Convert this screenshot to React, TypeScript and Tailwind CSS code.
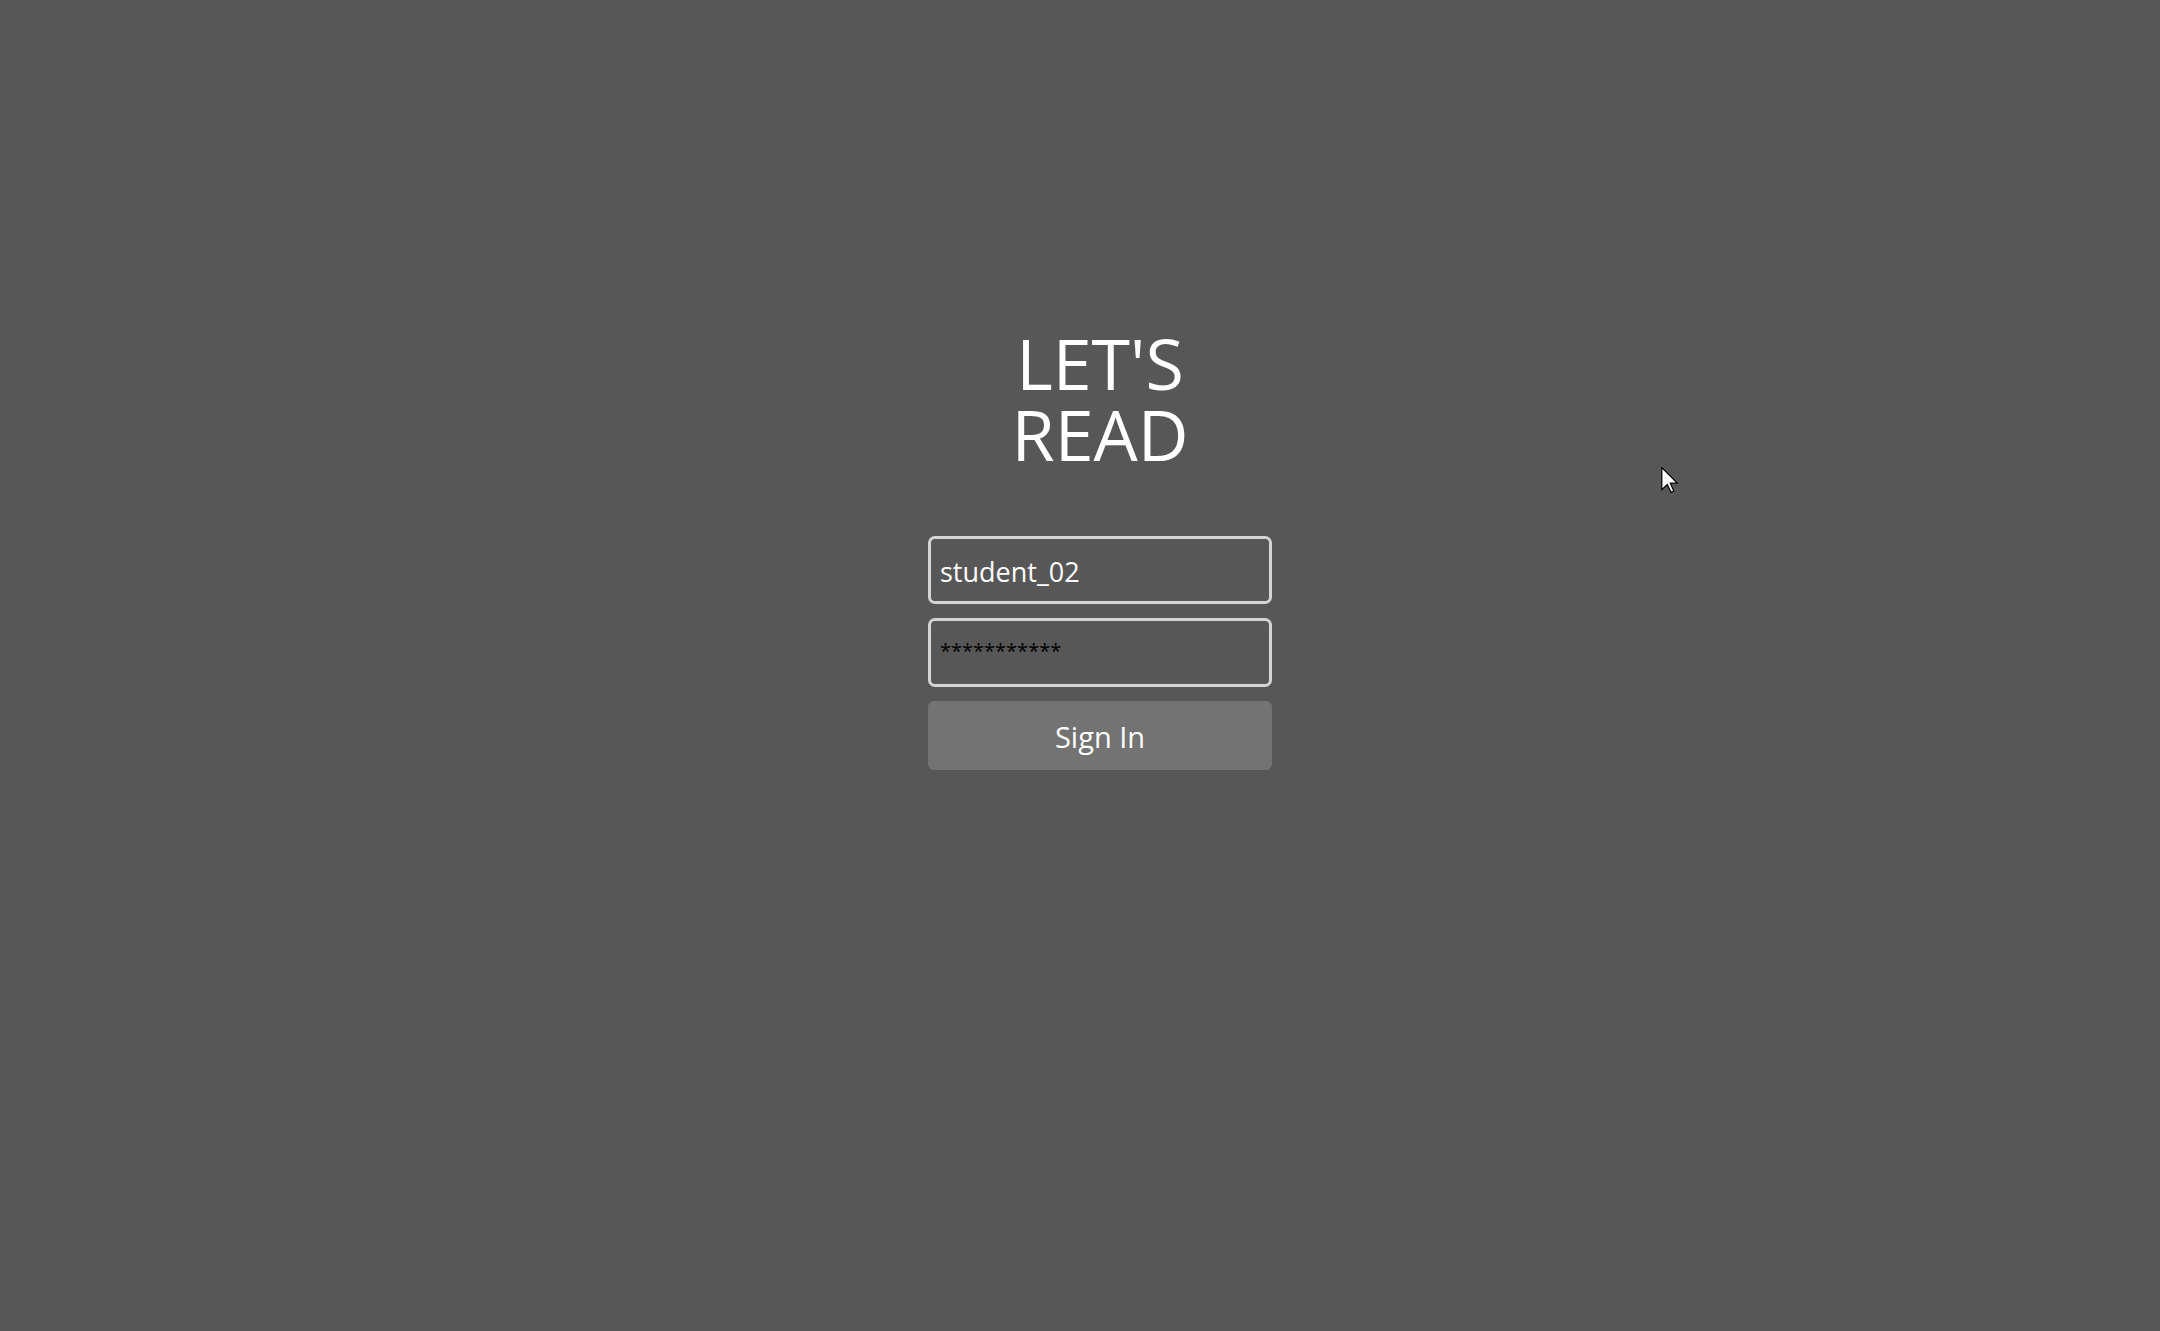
import React from "react";

export default function App() {
  return (
    <div className="relative h-[1331px] w-full overflow-hidden bg-[#575757] font-['Open_Sans','Noto_Sans',sans-serif]">
      <div className="flex flex-col items-center pl-[40px] pt-[328px]">
        <h1 className="text-center text-[70px] font-normal leading-[71px] text-white">
          LET'S
          <br />
          READ
        </h1>
        <div className="mt-[66px] flex w-[344px] flex-col gap-[14px]">
          <div className="flex h-[68px] items-center rounded-[7px] border-[3px] border-[#d4d4d4] px-[9px] pt-[5px] text-[27px] text-white">
            student_02
          </div>
          <div className="flex h-[69px] items-center rounded-[7px] border-[3px] border-[#d4d4d4] px-[9px] pb-[4px] text-[20px] text-black">
            ***********
          </div>
          <button className="flex h-[69px] items-center justify-center rounded-[6px] bg-[#737373] pt-[2px] text-[29px] text-white">
            Sign In
          </button>
        </div>
      </div>
      <svg
        className="absolute left-[1661px] top-[467px]"
        width="18"
        height="26"
        viewBox="0 0 13 19"
      >
        <path
          d="M0.5 0.5 L0.5 16.5 L4.5 12.8 L7.2 18.5 L9.3 17.6 L6.7 11.8 L11.8 11.8 Z"
          fill="#ffffff"
          stroke="#000000"
          strokeWidth="0.9"
          strokeLinejoin="miter"
        />
      </svg>
    </div>
  );
}
